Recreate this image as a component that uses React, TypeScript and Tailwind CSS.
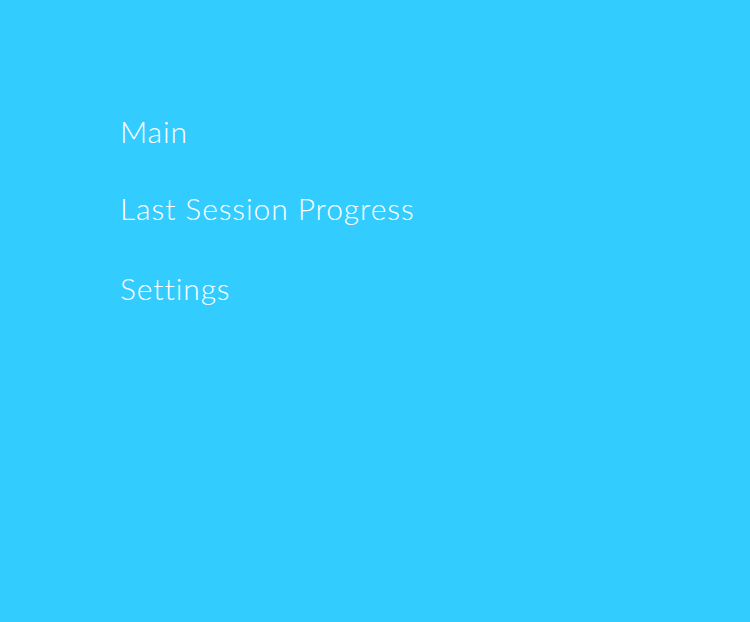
import React from "react";

const items = [
    { label: "Main", spacing: "" },
    { label: "Last Session Progress", spacing: "mt-[47px]" },
    { label: "Settings", spacing: "mt-[50px]" },
];

const App: React.FC = () => {
    return (
        <div className="h-[622px] w-[750px] bg-[#33ccff] font-['Lato',sans-serif] text-white">
            <nav className="flex flex-col pl-[120px] pt-[116px]">
                {items.map((item) => (
                    <div
                        key={item.label}
                        className={`${item.spacing} text-[30px] leading-[30px] font-light tracking-[0.9px] [font-variant-ligatures:none]`}
                    >
                        {item.label}
                    </div>
                ))}
            </nav>
        </div>
    );
};

export default App;
